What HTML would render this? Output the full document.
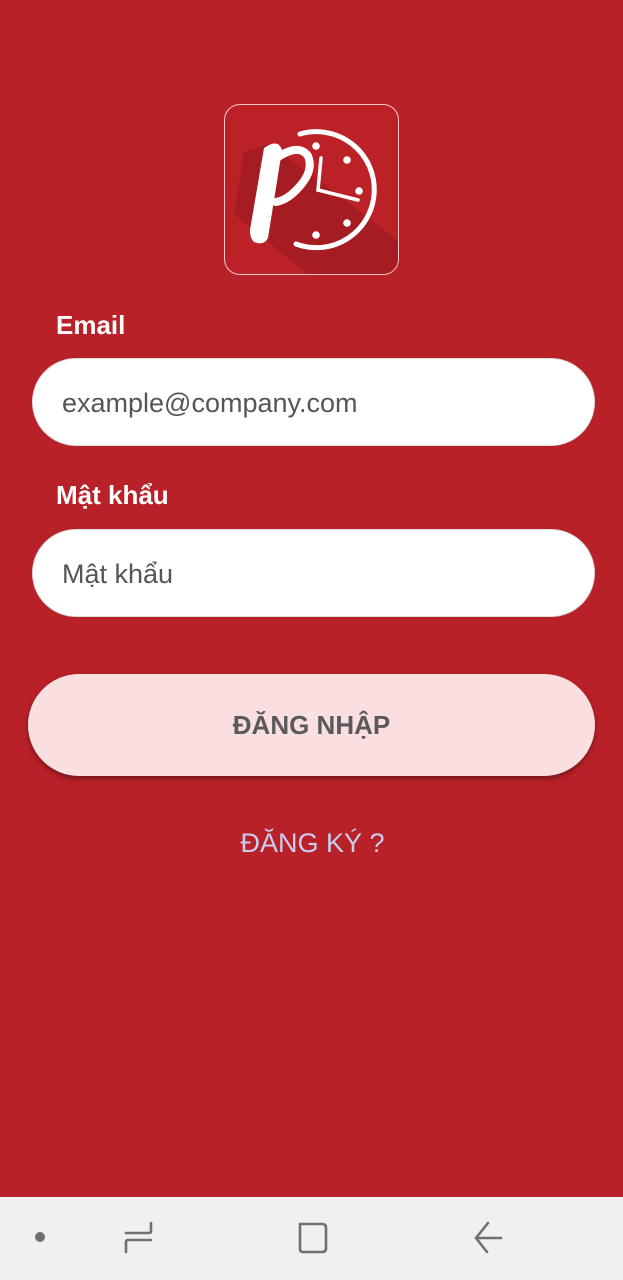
<!DOCTYPE html>
<html><head><meta charset="utf-8"><style>
*{margin:0;padding:0;box-sizing:border-box}
html,body{width:623px;height:1280px;overflow:hidden}
body{background:#b82128;font-family:"Liberation Sans",Roboto,sans-serif;position:relative}
.logo{position:absolute;left:224px;top:104px;width:175px;height:171px;border:1px solid #f0c8c8;border-radius:16px;background:#bc2127;overflow:hidden}
.logo svg{position:absolute;left:-1px;top:-1px}
.lbl{position:absolute;left:56px;color:#fff;font-weight:bold;font-size:26px}
.inp{position:absolute;left:32px;width:563px;height:88px;background:#fff;border-radius:44px;color:#555;font-size:27px;padding-left:29px;line-height:88px;border:1px solid #ddd}
.btn{position:absolute;left:28px;top:674px;width:567px;height:102px;background:#fadfe0;border-radius:51px;box-shadow:0 3px 5px rgba(0,0,0,.35);text-align:center;line-height:102px;font-weight:bold;font-size:26px;color:#5a5a5a}
.reg{position:absolute;top:828px;left:0;width:623px;text-align:center;color:#c9cdf0;font-size:27px;padding-left:2px}
.nav{position:absolute;top:1197px;left:0;width:623px;height:83px;background:#f0f0f0}
</style></head><body>
<div class="logo"><svg width="175" height="171" viewBox="0 0 175 171">
<polygon points="20,48 46,40 150,118 175,138 175,171 85,171 10,110" fill="#a51c22"/>
<path d="M76 30 A58 58 0 1 1 72 140" fill="none" stroke="#fff" stroke-width="5" stroke-linecap="round"/>
<circle cx="92" cy="42" r="3.8" fill="#fff"/><circle cx="123" cy="56" r="3.8" fill="#fff"/>
<circle cx="135" cy="87" r="3.8" fill="#fff"/><circle cx="123" cy="119" r="3.8" fill="#fff"/>
<circle cx="92" cy="131" r="3.8" fill="#fff"/>
<path d="M97 54 L94 86 L134 96" fill="none" stroke="#fff" stroke-width="3.5" stroke-linecap="round"/>
<path d="M40 44 Q54 34 58 46 L44 134 Q40 142 30 138 Q24 132 27 120 Z" fill="#fff"/>
<path d="M50 56 Q74 38 84 52 Q90 66 76 82 Q64 96 52 98" fill="none" stroke="#fff" stroke-width="8" stroke-linecap="round"/>
</svg></div>
<div class="lbl" style="top:310px">Email</div>
<div class="inp" style="top:358px">example@company.com</div>
<div class="lbl" style="top:480px">Mật khẩu</div>
<div class="inp" style="top:529px">Mật khẩu</div>
<div class="btn">ĐĂNG NHẬP</div>
<div class="reg">ĐĂNG KÝ ?</div>
<div class="nav"><svg width="623" height="83">
<circle cx="40" cy="40" r="5" fill="#707070"/>
<path d="M151 26 V34 Q151 36 149 36 H126 M151 43 H128 Q126 43 126 45 V55" stroke="#707070" stroke-width="2.6" fill="none" stroke-linecap="round"/>
<path d="M300 27 H322 Q326 27 326 31 V51 Q326 55 322 55 H303 Q300 55 300 52 V27" stroke="#707070" stroke-width="2.6" fill="none" stroke-linecap="round"/>
<path d="M488 26 L476 41 L487 55 M478 41 H501" stroke="#707070" stroke-width="2.6" fill="none" stroke-linecap="round"/>
</svg></div>
</body></html>
